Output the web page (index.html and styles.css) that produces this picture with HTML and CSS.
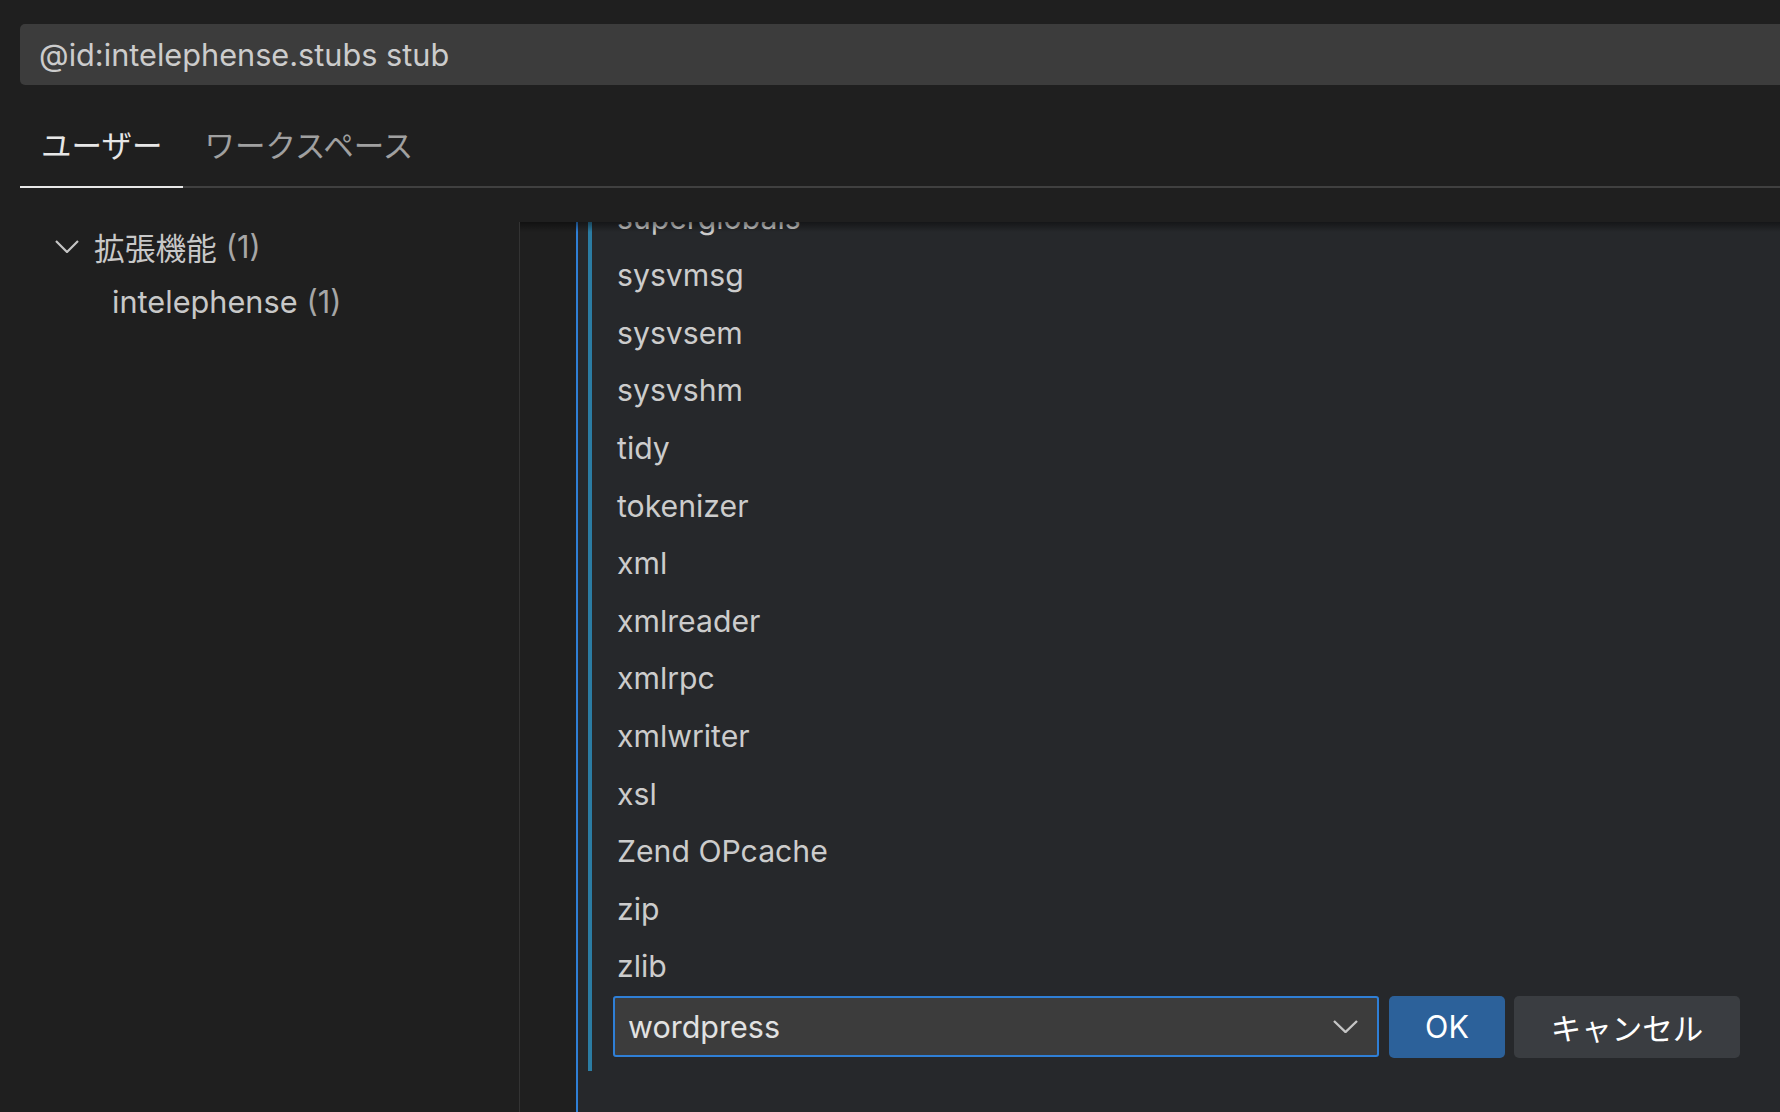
FILE: index.html
```html
<!DOCTYPE html>
<html lang="ja">
<head>
<meta charset="utf-8">
<title>Settings</title>
<link rel="stylesheet" href="styles.css">
</head>
<body>
<div class="app">
  <div class="search">@id:intelephense.stubs stub</div>
  <div class="tabs">
    <div class="tab active">ユーザー</div>
    <div class="tab">ワークスペース</div>
  </div>
  <div class="main">
    <div class="tree">
      <div class="tree-row level1">
        <svg class="chev" viewBox="0 0 24 13" width="24" height="13"><polyline points="1,1 12,12 23,1" fill="none" stroke="#c5c5c5" stroke-width="2.2"/></svg>
        <span class="name">拡張機能</span><span class="count">(1)</span>
      </div>
      <div class="tree-row level2">
        <span class="name">intelephense</span><span class="count">(1)</span>
      </div>
    </div>
    <div class="panel">
      <div class="setting">
        <div class="list">
          <div class="item">superglobals</div>
          <div class="item">sysvmsg</div>
          <div class="item">sysvsem</div>
          <div class="item">sysvshm</div>
          <div class="item">tidy</div>
          <div class="item">tokenizer</div>
          <div class="item">xml</div>
          <div class="item">xmlreader</div>
          <div class="item">xmlrpc</div>
          <div class="item">xmlwriter</div>
          <div class="item">xsl</div>
          <div class="item">Zend OPcache</div>
          <div class="item">zip</div>
          <div class="item">zlib</div>
          <div class="edit-row">
            <div class="select">
              <span>wordpress</span>
              <svg class="select-chev" viewBox="0 0 25 13" width="25" height="13"><polyline points="1,1 12.5,12 24,1" fill="none" stroke="#c5c5c5" stroke-width="2.4"/></svg>
            </div>
            <button class="btn primary">OK</button>
            <button class="btn secondary">キャンセル</button>
          </div>
        </div>
      </div>
    </div>
  </div>
</div>
</body>
</html>
```

FILE: styles.css
```css
* { box-sizing: border-box; }
html, body {
  margin: 0;
  padding: 0;
  background: #1f1f1f;
}
body {
  width: 1780px;
  height: 1112px;
  overflow: hidden;
  font-family: Inter, "Noto Sans CJK JP", sans-serif;
  color: #cccccc;
}
.app {
  display: flex;
  flex-direction: column;
  height: 1112px;
}
.search {
  flex-shrink: 0;
  margin: 24px 0 0 20px;
  height: 61px;
  background: #3c3c3c;
  border-radius: 5px 0 0 5px;
  padding-left: 19px;
  font-size: 30.7px;
  line-height: 61px;
  color: #cccccc;
  white-space: nowrap;
}
.tabs {
  flex-shrink: 0;
  display: flex;
  margin-left: 20px;
  border-bottom: 2px solid #404040;
}
.tab {
  padding: 43px 21px 22px;
  line-height: 36px;
  font-size: 30.5px;
  color: #a0a0a0;
  margin-bottom: -2px;
  border-bottom: 2px solid transparent;
}
.tab.active {
  color: #e7e7e7;
  border-bottom-color: #e7e7e7;
}
.main {
  flex: 1 1 auto;
  display: flex;
  padding-top: 34px;
  min-height: 0;
}
.tree {
  width: 499px;
  margin-left: 20px;
  padding-left: 35px;
  flex-shrink: 0;
}
.tree-row {
  height: 53px;
  display: flex;
  align-items: center;
  font-size: 30.7px;
  white-space: nowrap;
}
.tree-row .chev {
  margin-right: 15px;
  flex-shrink: 0;
}
.tree-row .name {
  color: #c8c8c8;
  margin-right: 9px;
}
.tree-row .count {
  color: #a6a6a6;
}
.level1 {
  padding-bottom: 4px;
}
.level2 {
  padding-left: 57px;
}
.panel {
  flex: 1;
  position: relative;
  display: flex;
  flex-direction: column;
  border-left: 1px solid #333333;
  overflow: hidden;
  background: #1f1f1f;
}
.panel::before {
  content: "";
  position: absolute;
  left: 0;
  right: 0;
  top: 0;
  height: 10px;
  background: linear-gradient(to bottom, rgba(0,0,0,0.45), rgba(0,0,0,0));
  z-index: 2;
}
.setting {
  flex: 1 0 auto;
  margin-left: 56px;
  border-left: 2px solid #2f7fd6;
  background: #26282b;
  padding-left: 10px;
}
.list {
  margin-top: -32.4px;
  border-left: 4px solid #2b7ca3;
  padding-left: 21px;
  padding-bottom: 13px;
}
.item {
  height: 57.6px;
  line-height: 57.6px;
  padding-left: 4px;
  font-size: 30.2px;
  color: #cccccc;
}
.edit-row {
  display: flex;
  align-items: stretch;
  height: 62px;
}
.select {
  width: 766px;
  height: 61px;
  border: 2px solid #2f7fd6;
  border-radius: 3px;
  background: #3c3c3c;
  display: flex;
  align-items: center;
  justify-content: space-between;
  padding: 0 19px 0 13px;
  font-size: 30.5px;
  color: #e2e2e2;
}
.btn {
  border: none;
  border-radius: 5px;
  font-family: Inter, "Noto Sans CJK JP", sans-serif;
  font-size: 30.5px;
  color: #ffffff;
  height: 62px;
  padding: 0;
}
.btn.primary {
  margin-left: 10px;
  width: 116px;
  background: #2c619a;
}
.btn.secondary {
  margin-left: 9px;
  width: 226px;
  background: #3a3d41;
}
```
